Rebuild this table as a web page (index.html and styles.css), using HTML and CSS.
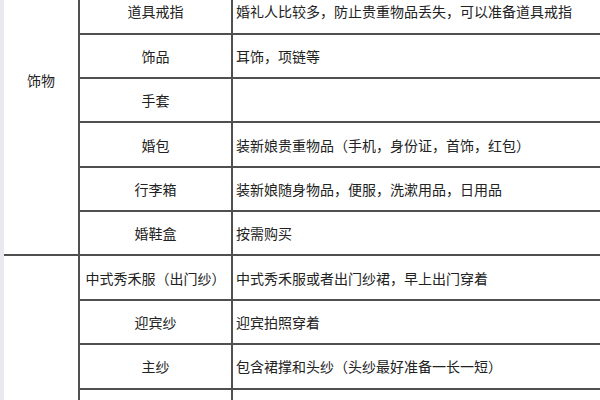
FILE: index.html
```html
<!DOCTYPE html>
<html lang="zh">
<head>
<meta charset="utf-8">
<link rel="stylesheet" href="styles.css">
</head>
<body>
<div class="page">
  <div class="sheet">
    <div class="group g1"><span class="group-label">饰物</span></div>
    <div class="item">道具戒指</div><div class="desc">婚礼人比较多，防止贵重物品丢失，可以准备道具戒指</div>
    <div class="item">饰品</div><div class="desc">耳饰，项链等</div>
    <div class="item">手套</div><div class="desc"></div>
    <div class="item">婚包</div><div class="desc">装新娘贵重物品（手机，身份证，首饰，红包）</div>
    <div class="item">行李箱</div><div class="desc">装新娘随身物品，便服，洗漱用品，日用品</div>
    <div class="item">婚鞋盒</div><div class="desc">按需购买</div>

    <div class="group g2"></div>
    <div class="item">中式秀禾服（出门纱）</div><div class="desc">中式秀禾服或者出门纱裙，早上出门穿着</div>
    <div class="item">迎宾纱</div><div class="desc">迎宾拍照穿着</div>
    <div class="item">主纱</div><div class="desc">包含裙撑和头纱（头纱最好准备一长一短）</div>
    <div class="item">敬酒服</div><div class="desc">敬酒时穿着，可以准备一套或者两套，根据个人喜好</div>
  </div>
</div>
</body>
</html>
```

FILE: styles.css
```css
html, body {
  margin: 0;
  padding: 0;
  background: #ffffff;
  overflow: hidden;
}

.page {
  width: 600px;
  height: 400px;
  overflow: hidden;
  border-left: 4px solid #e9e9ef;
  box-sizing: border-box;
  font-family: "Noto Sans CJK SC", "Noto Sans", sans-serif;
  font-size: 14px;
  color: #222222;
}

.sheet {
  display: grid;
  grid-template-columns: 76px 153px 1fr;
  grid-auto-rows: 44.375px;
  margin-top: -9.8px;
}

.group {
  grid-column: 1;
  border-right: 2px solid #505050;
  border-bottom: 2px solid #505050;
  box-sizing: border-box;
  text-align: center;
}

.g1 {
  grid-row: 1 / span 6;
  padding-top: 80px;
}

.g2 {
  grid-row: 7 / span 5;
}

.group-label {
  display: block;
  line-height: 20px;
}

.item,
.desc {
  display: flex;
  align-items: center;
  border-bottom: 2px solid #505050;
  box-sizing: border-box;
  white-space: nowrap;
}

.item {
  grid-column: 2;
  justify-content: center;
  border-right: 2px solid #505050;
}

.desc {
  grid-column: 3;
  padding-left: 3px;
}
```
